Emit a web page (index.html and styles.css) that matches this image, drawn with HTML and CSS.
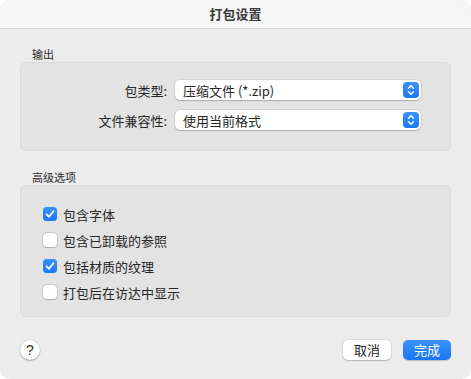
FILE: index.html
```html
<!DOCTYPE html>
<html lang="zh-CN">
<head>
  <meta charset="UTF-8" />
  <title>打包设置</title>
  <link rel="stylesheet" href="styles.css">
</head>
<body>

<div class="window">
  <div class="titlebar">打包设置</div>

  <div class="content">
    <div class="section-label">输出</div>
    <div class="group output-group">
      <div class="form-row">
        <label>包类型:</label>
        <div class="popup">
          <span>压缩文件 (*.zip)</span>
          <span class="stepper">
            <svg width="16" height="16" viewBox="0 0 16 16"><path d="M5.5 6.2 8 3.8l2.5 2.4M5.5 9.8 8 12.2l2.5-2.4" fill="none" stroke="#fff" stroke-width="1.5" stroke-linecap="round" stroke-linejoin="round"/></svg>
          </span>
        </div>
      </div>
      <div class="form-row">
        <label>文件兼容性:</label>
        <div class="popup">
          <span>使用当前格式</span>
          <span class="stepper">
            <svg width="16" height="16" viewBox="0 0 16 16"><path d="M5.5 6.2 8 3.8l2.5 2.4M5.5 9.8 8 12.2l2.5-2.4" fill="none" stroke="#fff" stroke-width="1.5" stroke-linecap="round" stroke-linejoin="round"/></svg>
          </span>
        </div>
      </div>
    </div>

    <div class="section-label advanced-label">高级选项</div>
    <div class="group options-group">
      <div class="check-row">
        <span class="checkbox checked">
          <svg width="14" height="14" viewBox="0 0 14 14"><path d="M3.6 7.4 6 9.8l4.4-5.6" fill="none" stroke="#fff" stroke-width="1.8" stroke-linecap="round" stroke-linejoin="round"/></svg>
        </span>
        <span>包含字体</span>
      </div>
      <div class="check-row">
        <span class="checkbox"></span>
        <span>包含已卸载的参照</span>
      </div>
      <div class="check-row">
        <span class="checkbox checked">
          <svg width="14" height="14" viewBox="0 0 14 14"><path d="M3.6 7.4 6 9.8l4.4-5.6" fill="none" stroke="#fff" stroke-width="1.8" stroke-linecap="round" stroke-linejoin="round"/></svg>
        </span>
        <span>包括材质的纹理</span>
      </div>
      <div class="check-row">
        <span class="checkbox"></span>
        <span>打包后在访达中显示</span>
      </div>
    </div>

    <div class="footer">
      <button class="help-button">?</button>
      <div class="footer-buttons">
        <button class="btn">取消</button>
        <button class="btn primary">完成</button>
      </div>
    </div>
  </div>
</div>

</body>
</html>
```

FILE: styles.css
```css
body {
  margin: 0;
  padding: 0;
  background-color: #ffffff;
  font-family: "Noto Sans CJK SC", "Liberation Sans", sans-serif;
  color: #262626;
}
.window {
  width: 471px;
  height: 379px;
  background-color: #ececec;
  border-radius: 10px;
  overflow: hidden;
  box-sizing: border-box;
}
.titlebar {
  height: 28px;
  line-height: 28px;
  background-color: #f6f6f6;
  border-bottom: 1px solid #d2d2d2;
  text-align: center;
  font-size: 13px;
  font-weight: 600;
  color: #3a3a3a;
}
.content {
  padding: 17px 20px 0 20px;
}
.section-label {
  margin-left: 12px;
  font-size: 11px;
  line-height: 16px;
  color: #2b2b2b;
}
.advanced-label {
  margin-top: 18px;
}
.group {
  background-color: #e3e3e3;
  border: 1px solid #dadada;
  border-radius: 6px;
  box-sizing: border-box;
}
.output-group {
  height: 89px;
  padding-top: 17px;
  display: flex;
  flex-direction: column;
  gap: 10px;
}
.form-row {
  display: flex;
  align-items: center;
  height: 20px;
}
.form-row label {
  width: 146px;
  text-align: right;
  font-size: 13px;
  color: #262626;
}
.popup {
  margin-left: 8px;
  width: 246px;
  height: 20px;
  background-color: #ffffff;
  border-radius: 5px;
  box-shadow: 0 0 0 0.5px rgba(0,0,0,0.12), 0 1px 1.5px rgba(0,0,0,0.2);
  display: flex;
  align-items: center;
  justify-content: space-between;
  padding: 0 2px 0 8px;
  box-sizing: border-box;
  font-size: 13px;
}
.stepper {
  width: 16px;
  height: 16px;
  border-radius: 4px;
  background: linear-gradient(#3d93fb, #1a78f5);
  display: flex;
}
.options-group {
  height: 132px;
  padding: 21px 0 0 22px;
  display: flex;
  flex-direction: column;
  gap: 12px;
}
.check-row {
  display: flex;
  align-items: center;
  height: 14px;
  gap: 6px;
  font-size: 13px;
}
.checkbox {
  width: 14px;
  height: 14px;
  border-radius: 3.5px;
  background-color: #ffffff;
  box-shadow: 0 0 0 0.5px rgba(0,0,0,0.2), 0 0.5px 1px rgba(0,0,0,0.15);
  display: flex;
  box-sizing: border-box;
}
.checkbox.checked {
  background: linear-gradient(#3a91fb, #1a78f5);
  box-shadow: none;
}
.footer {
  margin-top: 23px;
  display: flex;
  justify-content: space-between;
  align-items: center;
}
.help-button {
  width: 20px;
  height: 20px;
  border-radius: 50%;
  border: none;
  padding: 0;
  background-color: #ffffff;
  box-shadow: 0 0 0 0.5px rgba(0,0,0,0.12), 0 1px 1.5px rgba(0,0,0,0.25);
  font-family: "Liberation Sans", sans-serif;
  font-size: 14px;
  line-height: 20px;
  color: #2a2a2a;
}
.footer-buttons {
  display: flex;
  gap: 12px;
}
.btn {
  width: 48px;
  height: 20px;
  padding: 0;
  border: none;
  border-radius: 5px;
  background-color: #ffffff;
  box-shadow: 0 0 0 0.5px rgba(0,0,0,0.12), 0 1px 1.5px rgba(0,0,0,0.2);
  font-family: "Noto Sans CJK SC", sans-serif;
  font-size: 13px;
  line-height: 20px;
  color: #262626;
}
.btn.primary {
  background: linear-gradient(#3b92fb, #1a77f4);
  color: #ffffff;
  box-shadow: 0 0.5px 1px rgba(0,0,0,0.2);
}
```
